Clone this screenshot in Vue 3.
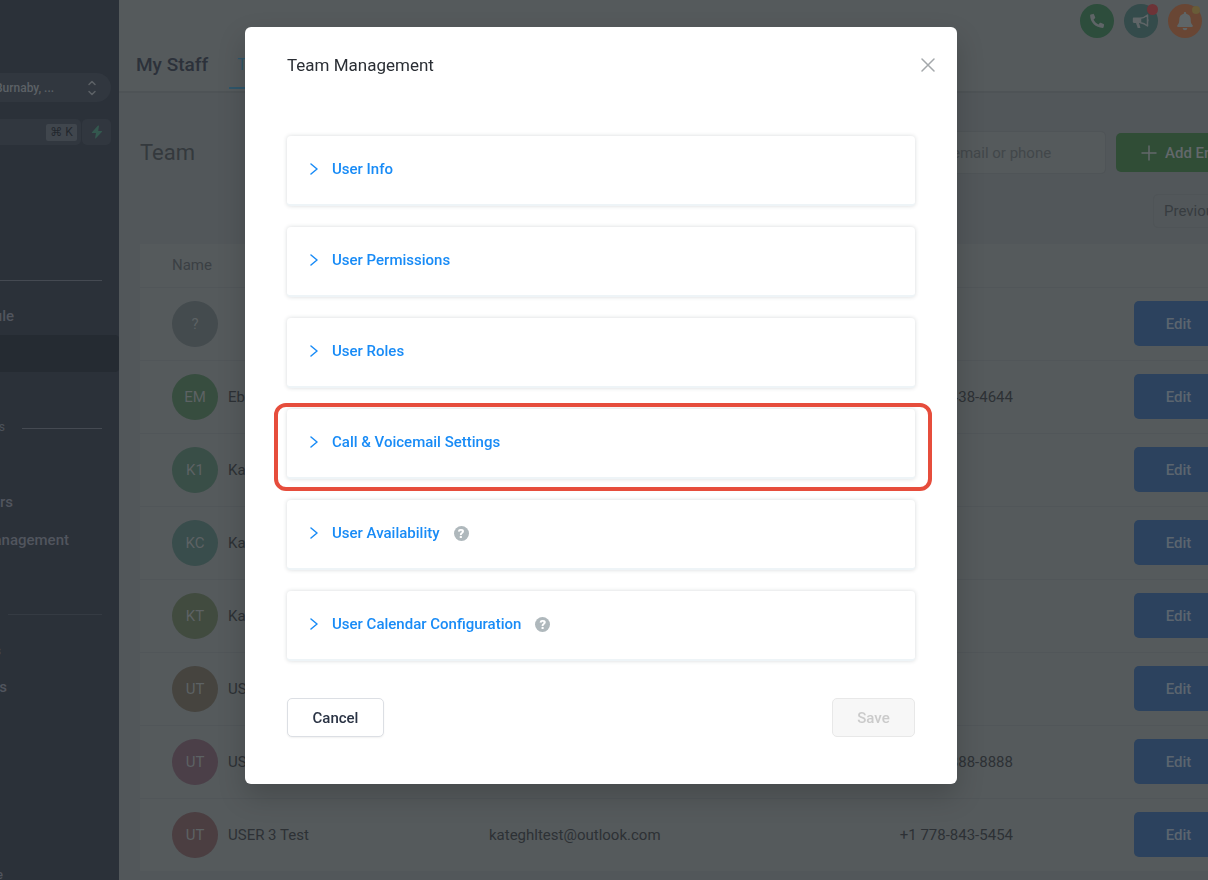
<script setup>
import { ref } from 'vue'

const rows = [
  { initials: '?', tone: 'grey', name: '', email: '', phone: '' },
  { initials: 'EM', tone: 'green', name: 'Eb', email: '', phone: '438-4644' },
  { initials: 'K1', tone: 'jade', name: 'Ka', email: '', phone: '' },
  { initials: 'KC', tone: 'teal', name: 'Ka', email: '', phone: '' },
  { initials: 'KT', tone: 'olive', name: 'Ka', email: '', phone: '' },
  { initials: 'UT', tone: 'brown', name: 'US', email: '', phone: '' },
  { initials: 'UT', tone: 'plum', name: 'US', email: '', phone: '888-8888' },
  { initials: 'UT', tone: 'red', name: 'USER 3 Test', email: 'kateghltest@outlook.com', phone: '+1 778-843-5454' },
]

const sections = [
  { title: 'User Info' },
  { title: 'User Permissions' },
  { title: 'User Roles' },
  { title: 'Call & Voicemail Settings', marked: true },
  { title: 'User Availability', help: true },
  { title: 'User Calendar Configuration', help: true },
]

const query = ref('')
</script>

<template>
  <div class="app">
    <aside class="sidebar">
      <button class="account" type="button">
        <span>Burnaby, ...</span>
        <svg width="10" height="16" viewBox="0 0 10 16" fill="none" stroke="currentColor" stroke-width="1.5" stroke-linecap="round" stroke-linejoin="round" aria-hidden="true">
          <path d="M2 4.500l3-3 3 3M2 11.500l3 3 3-3" />
        </svg>
      </button>
      <div class="quick">
        <button class="quick-search" type="button" aria-label="Search"><kbd>⌘ K</kbd></button>
        <button class="bolt" type="button" aria-label="Quick actions">
          <svg width="12" height="14" viewBox="0 0 12 14" aria-hidden="true"><path d="M7 .6 1 7.200c-.4.5-.1.9.4.9H5l-.9 4.900c-.1.6.4.7.8.3L11 6.800c.4-.5.1-.9-.4-.9H7.200L8 1c.1-.6-.6-.8-1-.4z" fill="currentColor" /></svg>
        </button>
      </div>
      <nav>
        <div class="rule first"></div>
        <a class="link schedule" href="#">ule</a>
        <a class="link active" href="#" aria-label="My Staff"></a>
        <div class="group"><span>s</span><i></i></div>
        <a class="link members" href="#">rs</a>
        <a class="link management" href="#">anagement</a>
        <div class="rule second"></div>
        <a class="link small" href="#">s</a>
        <a class="link tail" href="#">s</a>
        <a class="link last" href="#">e</a>
      </nav>
    </aside>

    <main>
      <header>
        <h1>My Staff</h1>
        <a class="tab" href="#">T</a>
        <div class="round-icons">
          <button class="round call" type="button" aria-label="Call">
            <svg width="20" height="20" viewBox="0 0 20 20" aria-hidden="true"><path d="M3.800 3.400 6 2.900c.4-.1.8.1 1 .5l1.200 2.900c.1.4 0 .8-.2 1L6.600 8.500c.9 2.200 2.700 4 4.900 4.900l1.200-1.400c.3-.3.7-.4 1-.2l2.900 1.200c.4.2.6.6.5 1l-.5 2.200c-.1.4-.5.7-.9.7C8.700 16.900 3.100 11.300 3.100 4.300c0-.4.3-.8.7-.9z" fill="currentColor" /></svg>
          </button>
          <button class="round news" type="button" aria-label="Announcements">
            <svg width="18" height="16" viewBox="0 0 18 16" aria-hidden="true">
              <path d="M2 4.500h6.500v5.500H7l1.400 4.400c.1.400-.1.600-.5.600H5.700L4 10H2C1.200 10 .8 9.500.8 8.800V5.700c0-.7.4-1.200 1.200-1.200z" fill="currentColor" />
              <path d="M8.500 5.300c2.600-.2 4.700-1.300 7-3.300v11c-2.300-2-4.400-3-7-3.200z" fill="none" stroke="currentColor" stroke-width="1.500" stroke-linejoin="round" />
              <path d="M15.400 5.500c1.500.3 1.500 3.300 0 3.600z" fill="currentColor" />
            </svg>
            <i class="dot"></i>
          </button>
          <button class="round bell" type="button" aria-label="Notifications">
            <svg width="18" height="20" viewBox="0 0 18 20" aria-hidden="true"><path d="M9 1c.7 0 1.200.5 1.200 1.100v.6c2.700.5 4.500 2.600 4.500 5.300 0 4 .9 5.200 1.900 6.200.6.700.2 1.800-.8 1.800H2.200c-1 0-1.400-1.100-.8-1.800 1-1 1.900-2.200 1.900-6.200 0-2.700 1.800-4.800 4.500-5.300v-.6C7.800 1.500 8.300 1 9 1zM6.700 17h4.600c0 1.300-1 2.300-2.300 2.300S6.700 18.300 6.700 17z" fill="currentColor" /></svg>
            <i class="dot"></i>
          </button>
        </div>
      </header>

      <section class="content">
        <div class="toolbar">
          <h2>Team</h2>
          <input v-model="query" type="search" placeholder="email or phone" aria-label="Search by email or phone" />
          <button class="add" type="button">
            <svg width="16" height="16" viewBox="0 0 16 16" stroke="currentColor" stroke-width="1.500" stroke-linecap="round" aria-hidden="true"><path d="M8 1v14M1 8h14" /></svg>
            Add Em
          </button>
        </div>
        <div class="pager"><button type="button">Previous</button></div>
        <table>
          <colgroup><col class="c-name" /><col class="c-email" /><col class="c-phone" /><col class="c-action" /></colgroup>
          <thead>
            <tr><th scope="col">Name</th><th></th><th></th><th></th></tr>
          </thead>
          <tbody>
            <tr v-for="(row, i) in rows" :key="i">
              <td><div class="person"><span class="avatar" :class="row.tone">{{ row.initials }}</span>{{ row.name }}</div></td>
              <td>{{ row.email }}</td>
              <td class="phone">{{ row.phone }}</td>
              <td class="action"><button class="edit" type="button">Edit</button></td>
            </tr>
          </tbody>
        </table>
      </section>
    </main>

    <div class="overlay">
      <div class="modal" role="dialog" aria-modal="true" aria-labelledby="dialog-title">
        <div class="modal-head">
          <h2 id="dialog-title">Team Management</h2>
          <button class="close" type="button" aria-label="Close">
            <svg width="14" height="14" viewBox="0 0 14 14" stroke="currentColor" stroke-width="1.500" stroke-linecap="round" aria-hidden="true"><path d="M1 1l12 12M13 1 1 13" /></svg>
          </button>
        </div>
        <div class="sections">
          <div v-for="s in sections" :key="s.title" class="card" :class="{ marked: s.marked }">
            <button class="toggle" type="button" aria-expanded="false">
              <svg width="8" height="12" viewBox="0 0 8 12" fill="none" stroke="currentColor" stroke-width="1.500" stroke-linecap="round" stroke-linejoin="round" aria-hidden="true"><path d="M1 1l6 5-6 5" /></svg>
              {{ s.title }}
            </button>
            <span v-if="s.help" class="help" role="img" aria-label="Help">?</span>
          </div>
        </div>
        <div class="modal-foot">
          <button class="cancel" type="button">Cancel</button>
          <button class="save" type="button" disabled>Save</button>
        </div>
      </div>
    </div>
  </div>
</template>

<style>
body { margin: 0; overflow: hidden; background: #52575a; }
</style>

<style scoped>
* { box-sizing: border-box; }
.app {
  display: flex;
  height: 100vh;
  overflow: hidden;
  font-family: Roboto, "Liberation Sans", sans-serif;
  font-size: 15px;
  color: #2d3135;
}
button { font: inherit; color: inherit; border: 0; padding: 0; background: none; cursor: pointer; }
a { color: inherit; text-decoration: none; }
h1, h2 { margin: 0; }
svg { display: block; flex: none; }

.sidebar { flex: none; width: 119px; padding-top: 73px; overflow: hidden; background: #2b3139; color: #51555e; }
.account {
  display: flex; align-items: center; justify-content: space-between;
  width: 111px; height: 29px; padding-right: 14px;
  border-radius: 0 15px 15px 0; background: #31373f;
  font-size: 12px; font-weight: 500; color: #5c6166;
}
.account span { margin-left: -5px; }
.quick { display: flex; gap: 1px; margin-top: 17px; }
.quick-search { display: flex; align-items: center; justify-content: flex-end; width: 81px; height: 26px; padding-right: 4px; border-radius: 0 5px 5px 0; background: #31373f; }
kbd { width: 31px; height: 17px; border-radius: 2px; background: #40464d; color: #23282e; font: 12px/16px Roboto, "DejaVu Sans", sans-serif; text-align: center; }
.bolt { display: grid; place-items: center; width: 29px; height: 26px; border-radius: 5px; background: #31373f; color: #34584f; }
nav { display: flex; flex-direction: column; font-weight: 500; }
.rule { height: 1px; width: 102px; background: #454a52; }
.rule.first { margin-top: 135px; }
.rule.second { width: 94px; margin: 64px 0 0 8px; background: #353b43; }
.link { display: block; height: 20px; line-height: 20px; white-space: nowrap; }
.schedule { width: 14px; margin-top: 25px; direction: rtl; }
.link.active { width: 119px; height: 37px; margin-top: 9px; border-radius: 0 4px 4px 0; background: #252b32; }
.group { display: flex; align-items: center; gap: 17px; height: 14px; margin-top: 48px; font-size: 12px; font-weight: 400; color: #4c5159; }
.group span { width: 5px; direction: rtl; }
.group i { width: 80px; height: 1px; margin-top: 3px; background: #454a52; }
.members { width: 13px; margin-top: 58px; direction: rtl; }
.management { width: 69px; margin-top: 18px; direction: rtl; }
.link.small { width: 1px; margin-top: 26px; direction: rtl; font-size: 12px; color: #4c5159; }
.tail { width: 7px; margin-top: 16px; direction: rtl; }
.link.last { width: 3px; margin-top: 168px; direction: rtl; font-size: 12px; }

main { flex: 1; min-width: 0; overflow: hidden; background: #52575a; }
header { display: flex; height: 93px; padding-left: 17px; border-bottom: 2px solid #4e5356; background: #555a5c; }
h1 { margin-top: 52px; font-size: 19px; line-height: 26px; font-weight: 500; color: #2c313a; white-space: nowrap; }
.tab { height: 89px; margin-left: 21px; padding: 55px 8px 0; border-bottom: 2px solid #2f566a; color: #2f566a; font-size: 16px; line-height: 20px; }
.round-icons { display: flex; gap: 10px; margin: 4px 6px 0 auto; }
.round { position: relative; display: grid; place-items: center; width: 34px; height: 34px; border-radius: 50%; color: #5f6567; }
.call { background: #2d4d3c; }
.news { background: #344b4b; }
.bell { background: #694634; }
.dot { position: absolute; top: 0; right: 0; width: 11px; height: 11px; border-radius: 50%; background: #6d3337; }
.bell .dot { top: 2px; right: 2px; width: 8px; height: 8px; background: #695c38; }

.content { width: 1138px; padding: 38px 0 0 21px; }
.toolbar { display: flex; align-items: center; height: 43px; }
h2 { font-weight: 400; }
.toolbar h2 { font-size: 22px; line-height: 30px; color: #34393d; }
.toolbar input { width: 226px; height: 43px; margin-left: auto; padding: 0 0 0 71px; border: 1px solid #4f5457; border-radius: 5px; outline: 0; background: #555a5c; color: #2d3135; font: inherit; }
.toolbar input::placeholder { color: #42474a; opacity: 1; }
.add { display: flex; align-items: center; gap: 8px; width: 141px; height: 39px; margin-left: 10px; padding-left: 25px; border-radius: 5px; background: #304d36; color: #63686b; font-weight: 500; white-space: nowrap; }
.pager { display: flex; justify-content: flex-end; margin: 20px 0 16px; }
.pager button { width: 104px; height: 34px; padding-left: 10px; border: 1px solid #4f5457; border-radius: 5px; text-align: left; color: #373c40; }

table { width: 100%; border-collapse: collapse; table-layout: fixed; background: #555a5c; }
.c-name { width: 349px; }
.c-email { width: 300px; }
.c-phone { width: 224px; }
th { height: 43px; padding: 0 0 0 32px; text-align: left; font-weight: 400; color: #3b4044; }
td { height: 73px; padding: 0; border-top: 1px solid #515659; white-space: nowrap; }
.person { display: flex; align-items: center; gap: 10px; padding-left: 32px; }
.avatar { display: grid; place-items: center; width: 46px; height: 46px; border-radius: 50%; color: #5d6264; }
.grey { background: #444b4e; }
.green { background: #374d3f; }
.jade { background: #394e47; }
.teal { background: #394d4c; }
.olive { background: #414b3f; }
.brown { background: #46443f; }
.plum { background: #4b3f48; }
.red { background: #4b3e41; }
.phone { text-align: right; }
.action { padding-left: 121px; }
.edit { width: 89px; height: 45px; border-radius: 5px; background: #2c425e; color: #5b656f; font-weight: 500; }

.overlay { position: fixed; inset: 0; display: flex; align-items: flex-start; justify-content: center; padding: 27px 30px 27px 24px; }
.modal { width: 100%; max-width: 712px; padding: 0 42px 47px; border-radius: 6px; background: #fff; box-shadow: 0 12px 28px rgba(0, 0, 0, .18); }
.modal-head { display: flex; align-items: center; justify-content: space-between; height: 76px; margin-right: -21px; }
.modal-head h2 { font-size: 17px; line-height: 24px; color: #2a2e34; }
.close { display: grid; place-items: center; width: 16px; height: 24px; color: #a4a8ab; }
.sections { display: grid; gap: 21px; margin-top: 33px; }
.card { position: relative; display: flex; align-items: center; height: 70px; padding: 0 23px 2px; border-radius: 4px; background: #fff; border-bottom: 2px solid #eef4f7; box-shadow: 0 0 4px rgba(40, 50, 60, .18); }
.toggle { display: flex; align-items: center; gap: 14px; height: 40px; color: #188bf6; font-weight: 500; }
.help { display: grid; place-items: center; width: 15px; height: 15px; margin-left: 14px; border-radius: 50%; background: #afb8bc; color: #fff; font-size: 13px; font-weight: 900; line-height: 15px; }
.marked::after { content: ""; position: absolute; inset: -6px -17px -14px -13px; border: 4px solid #e64d3c; border-radius: 12px; pointer-events: none; }
.modal-foot { display: flex; justify-content: space-between; margin-top: 37px; }
.modal-foot button { height: 39px; border: 1px solid #dcdfe4; border-radius: 5px; font-weight: 500; }
.cancel { width: 97px; background: #fff; color: #2a3344; box-shadow: 0 1px 2px rgba(0, 0, 0, .06); }
.modal-foot .save { width: 83px; border-color: #e8e8e8; background: #f7f7f7; color: #cbcbcb; cursor: default; }
</style>
